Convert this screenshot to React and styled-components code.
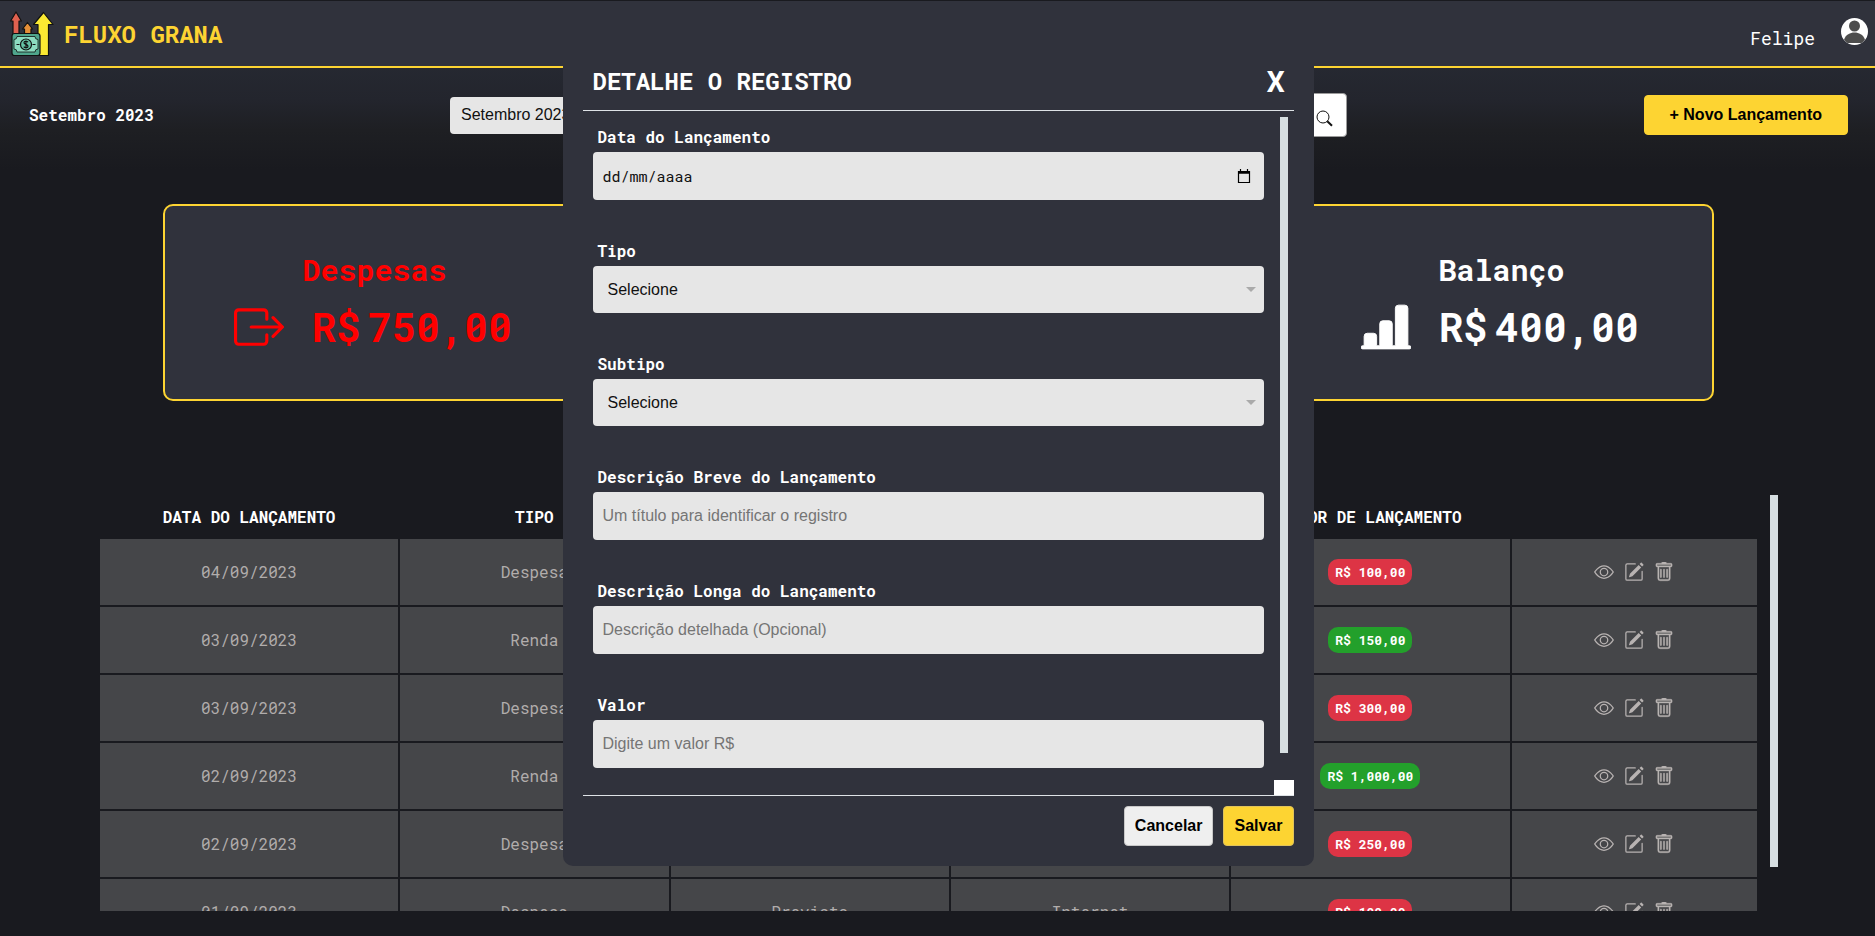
import React from 'react';
import styled, { createGlobalStyle } from 'styled-components';
import { BsEye, BsPencilSquare, BsTrash, BsBoxArrowRight, BsBarChartLineFill } from 'react-icons/bs';

const mono = '"Roboto Mono", "DejaVu Sans Mono", monospace';
const sans = '"Liberation Sans", Arial, sans-serif';
const yellow = '#fdd432';
const panel = '#30323c';
const dark = '#191a1f';
const thumb = '#d6dee1';

const GlobalStyle = createGlobalStyle`
  * { box-sizing: border-box; }
  body {
    margin: 0;
    background: ${dark};
    color: #fff;
    font-family: ${mono};
    font-size: 16px;
    line-height: 24px;
    overflow: hidden;
  }
  h1, h2, h3, p { margin: 0; }
  button, input, select { font: inherit; }
  button { cursor: pointer; }
`;

const Page = styled.div`
  display: flex;
  flex-direction: column;
  height: 100vh;
  background: linear-gradient(#262932 60px, #23252d 100px, #1e1f23 130px, ${dark} 170px);
`;

const Header = styled.header`
  display: flex;
  flex: none;
  justify-content: space-between;
  align-items: center;
  height: 68px;
  padding: 0 7px 0 10px;
  background: ${panel};
  border-top: 1px solid ${dark};
  border-bottom: 2px solid ${yellow};
`;

const Brand = styled.div`
  display: flex;
  align-items: center;
  gap: 10px;
`;

const BrandName = styled.h1`
  color: ${yellow};
  font-size: 24px;
  line-height: 32px;
`;

const User = styled.div`
  display: flex;
  align-items: flex-start;
  gap: 26px;
`;

const UserName = styled.span`
  padding-top: 8px;
  font-size: 18px;
`;

const FilterBar = styled.section`
  display: grid;
  flex: none;
  grid-template-columns: 24% 48% 1fr;
  align-items: center;
  height: 94px;
`;

const Period = styled.h2`
  padding-left: 29px;
  font-size: 16px;
`;

const Filters = styled.div`
  display: flex;
  align-items: center;
  justify-content: space-between;
  padding-right: 3px;
`;

const MonthSelect = styled.select`
  appearance: none;
  width: 200px;
  height: 37px;
  padding: 0 11px;
  border: 0;
  border-radius: 4px;
  background: #e6e6e6;
  color: #111;
  font-family: ${sans};
`;

const SearchButton = styled.button`
  display: flex;
  align-items: center;
  justify-content: flex-end;
  width: 52px;
  height: 44px;
  padding: 6px 13px 0;
  border: 1px solid #9b9b9b;
  border-radius: 4px;
  background: #fff;
`;

const Button = styled.button`
  height: 40px;
  padding: 0 ${p => p.$pad}px;
  border: 1px solid ${p => p.$edge};
  border-radius: 4px;
  background: ${p => p.$bg};
  color: #000;
  font: bold 16px ${sans};
`;

const NewEntry = styled.div`
  display: flex;
  justify-content: flex-end;
  padding-right: 27px;
`;

const Summary = styled.section`
  display: flex;
  flex: none;
  align-items: center;
  justify-content: space-between;
  height: 197px;
  margin: 42px 161px 94px 163px;
  padding: 0 70px 0 69px;
  background: ${panel};
  border: 2px solid ${yellow};
  border-radius: 10px;
`;

const Total = styled.article`
  width: 281px;
  color: ${p => p.$color};
  font-weight: bold;
`;

const TotalTitle = styled.h2`
  font-size: 30px;
  line-height: 42px;
  text-align: center;
`;

const TotalRow = styled.div`
  display: flex;
  align-items: center;
  gap: 28px;
  padding-top: 6px;

  svg {
    flex: none;
    font-size: 50px;
  }
`;

const Amount = styled.p`
  display: flex;
  gap: 8px;
  font-size: 40px;
  line-height: 60px;
`;

const Entries = styled.section`
  display: flex;
  flex: 1;
  gap: 11px;
  min-height: 0;
  margin: 0 97px 25px 98px;
`;

const TableView = styled.div`
  flex: 1;
  overflow: hidden;
`;

const Table = styled.table`
  width: 100%;
  table-layout: fixed;
  border-collapse: separate;
  border-spacing: 2px;
  text-align: center;
`;

const Col = styled.col`
  width: ${p => p.$w};
`;

const Th = styled.th`
  height: 40px;
  padding: 0;
  text-transform: uppercase;
`;

const Td = styled.td`
  height: 66px;
  padding: 0;
  background: #454649;
  color: #b1adac;
`;

const Badge = styled.span`
  display: inline-block;
  padding: 0 7px;
  border-radius: 10px;
  background: ${p => (p.$income ? '#23a02b' : '#dd3445')};
  color: #fff;
  font-size: 13px;
  font-weight: bold;
  line-height: 26px;
`;

const Actions = styled.div`
  display: flex;
  justify-content: center;
  gap: 10px;
`;

const IconButton = styled.button`
  display: flex;
  padding: 0;
  border: 0;
  background: none;
  color: #b8b3b2;
  font-size: 20px;
`;

const PageThumb = styled.div`
  width: 8px;
  height: 372px;
  background: ${thumb};
`;

const Modal = styled.div`
  position: fixed;
  top: 60px;
  left: 30%;
  display: flex;
  flex-direction: column;
  width: calc(40% + 1px);
  padding: 0 20px 20px;
  background: ${panel};
  border-radius: 0 0 10px 10px;

  &::before {
    content: '';
    position: absolute;
    right: 0;
    bottom: 100%;
    left: 0;
    height: 10px;
    background: ${panel};
  }
`;

const ModalHeader = styled.div`
  display: flex;
  align-items: center;
  justify-content: space-between;
  height: 51px;
  padding: 0 9px 8px 10px;
  border-bottom: 1px solid #dee2e6;
`;

const ModalTitle = styled.h2`
  font-size: 24px;
  line-height: 32px;
`;

const CloseButton = styled.button`
  padding: 0;
  border: 0;
  background: none;
  color: #fff;
  font-size: 30px;
  font-weight: bold;
  line-height: 40px;
`;

const ModalBody = styled.div`
  display: flex;
  gap: 10px;
  border-bottom: 1px solid #dee2e6;
`;

const Form = styled.form`
  display: flex;
  flex: 1;
  flex-direction: column;
  gap: 39px;
  padding: 14px 0 27px 10px;
`;

const Field = styled.div`
  display: flex;
  flex-direction: column;
  gap: 3px;
`;

const Label = styled.label`
  padding-left: 5px;
  font-weight: bold;
`;

const Control = styled.div`
  display: flex;
  align-items: center;
  height: ${p => p.$h}px;
  padding-right: ${p => p.$pr}px;
  border-radius: 4px;
  background: #e6e6e6;
`;

const Input = styled.input`
  flex: 1;
  min-width: 0;
  height: 100%;
  padding: 0 10px;
  border: 0;
  background: none;
  color: #111;
  font-family: ${p => (p.$mono ? mono : sans)};
  font-size: ${p => (p.$mono ? 15 : 16)}px;

  &::placeholder { color: ${p => (p.$mono ? '#111' : '#757575')}; opacity: 1; }
`;

const Select = styled.select`
  flex: 1;
  appearance: none;
  height: 100%;
  padding: 0 15px;
  border: 0;
  background: none;
  color: #111;
  font-family: ${sans};
`;

const Caret = styled.span`
  border: 5px solid transparent;
  border-top-color: #aaa;
  border-bottom: 0;
`;

const ScrollTrack = styled.div`
  display: flex;
  flex-direction: column;
  align-items: center;
  justify-content: space-between;
  width: 20px;
  padding-top: 6px;
`;

const ModalThumb = styled.div`
  width: 8px;
  height: 636px;
  background: ${thumb};
`;

const ScrollCorner = styled.div`
  width: 20px;
  height: 15px;
  background: #fff;
`;

const ModalFooter = styled.div`
  display: flex;
  justify-content: flex-end;
  gap: 10px;
  padding-top: 10px;
`;

const Logo = () => (
  <svg width="44" height="46" viewBox="10 11 44 46" stroke="#111" strokeWidth="1.2" strokeLinejoin="round" aria-hidden="true">
    <path d="M16 12l5.4 9H19v14h-6V21h-2.400z" fill="#e0614f" />
    <path d="M27.500 22.500l5 6.500H31v7h-6.500v-7h-2z" fill="#e58f38" />
    <path d="M43.500 12.500l9.500 12h-4.500V55.500H38v-31h-4.500z" fill="#fbe932" />
    <rect x="12" y="33.500" width="28" height="22" rx="2.500" fill="#4fa58c" />
    <path d="M17 36.500h18q0 3 3 3v9.500q-3 0-3 3H17q0-3-3-3v-9.500q3 0 3-3z" fill="#8cdcc0" strokeWidth=".8" />
    <circle cx="26" cy="44.500" r="5.500" fill="#65c3a5" />
    <path d="M16.500 44.500h3M32.500 44.500h3" />
    <path d="M28 42.200c-.8-1.400-4-1.300-4 .5s4 1.600 4 3.500-3.200 2-4.200.4M26 40.500v8" fill="none" />
  </svg>
);

const Avatar = () => (
  <svg width="27" height="27" viewBox="0 0 27 27" role="img" aria-label="Perfil">
    <circle cx="13.500" cy="13.500" r="13.500" fill="#fff" />
    <circle cx="13.500" cy="8" r="5.500" fill="#4d4d4d" />
    <path d="M3 21.500C5 16.500 9 14.500 13.500 14.500s8.500 2 10.500 7c-1 1.500-2.200 2.500-3.500 3.500h-14C5.200 24 4 23 3 21.500z" fill="#4d4d4d" />
  </svg>
);

const SearchIcon = () => (
  <svg width="17" height="17" viewBox="0 0 17 17" fill="none" stroke="#111" aria-hidden="true">
    <circle cx="7" cy="7" r="6" />
    <path d="M11.300 11.300l4.700 4.500" strokeWidth="2" />
  </svg>
);

const CalendarIcon = () => (
  <svg width="14" height="15" viewBox="0 0 14 15" fill="none" stroke="#000" aria-hidden="true">
    <path d="M1.500 2.500h11v11h-11z" strokeWidth="1.200" />
    <path d="M1 3.500h12" strokeWidth="2.500" />
    <path d="M3.500 0v3M10.500 0v3" strokeWidth="1.200" />
  </svg>
);

const entries = [
  { date: '04/09/2023', type: 'Despesa', value: 'R$ 100,00' },
  { date: '03/09/2023', type: 'Renda', value: 'R$ 150,00', income: true },
  { date: '03/09/2023', type: 'Despesa', value: 'R$ 300,00' },
  { date: '02/09/2023', type: 'Renda', value: 'R$ 1,000,00', income: true },
  { date: '02/09/2023', type: 'Despesa', value: 'R$ 250,00' },
  { date: '01/09/2023', type: 'Despesa', subtype: 'Previsto', title: 'Internet', value: 'R$ 100,00' },
];

const TextField = ({ id, label, placeholder }) => (
  <Field>
    <Label htmlFor={id}>{label}</Label>
    <Control $h={48} $pr={0}>
      <Input id={id} type="text" placeholder={placeholder} />
    </Control>
  </Field>
);

const SelectField = ({ id, label }) => (
  <Field>
    <Label htmlFor={id}>{label}</Label>
    <Control $h={47} $pr={8}>
      <Select id={id}>
        <option>Selecione</option>
      </Select>
      <Caret />
    </Control>
  </Field>
);

const EntryRow = ({ entry }) => (
  <tr>
    <Td>{entry.date}</Td>
    <Td>{entry.type}</Td>
    <Td>{entry.subtype}</Td>
    <Td>{entry.title}</Td>
    <Td><Badge $income={entry.income}>{entry.value}</Badge></Td>
    <Td>
      <Actions>
        <IconButton aria-label="Ver"><BsEye /></IconButton>
        <IconButton aria-label="Editar"><BsPencilSquare /></IconButton>
        <IconButton aria-label="Excluir"><BsTrash stroke="currentColor" strokeWidth="0.3" /></IconButton>
      </Actions>
    </Td>
  </tr>
);

export default function App() {
  return (
    <>
      <GlobalStyle />
      <Page>
        <Header>
          <Brand>
            <Logo />
            <BrandName>FLUXO GRANA</BrandName>
          </Brand>
          <User>
            <UserName>Felipe</UserName>
            <Avatar />
          </User>
        </Header>

        <FilterBar>
          <Period>Setembro 2023</Period>
          <Filters>
            <MonthSelect aria-label="Mês">
              <option>Setembro 2023</option>
            </MonthSelect>
            <SearchButton aria-label="Buscar"><SearchIcon /></SearchButton>
          </Filters>
          <NewEntry>
            <Button $bg={yellow} $edge={yellow} $pad={25}>+ Novo Lançamento</Button>
          </NewEntry>
        </FilterBar>

        <Summary>
          <Total $color="#ff0000">
            <TotalTitle>Despesas</TotalTitle>
            <TotalRow>
              <BsBoxArrowRight />
              <Amount><span>R$</span><span>750,00</span></Amount>
            </TotalRow>
          </Total>
          <Total $color="#ffffff">
            <TotalTitle>Balanço</TotalTitle>
            <TotalRow>
              <BsBarChartLineFill stroke="currentColor" strokeWidth="0.3" />
              <Amount><span>R$</span><span>400,00</span></Amount>
            </TotalRow>
          </Total>
        </Summary>

        <Entries>
          <TableView>
            <Table>
              <colgroup>
                <Col $w="18.1%" />
                <Col $w="16.3%" />
                <Col $w="16.9%" />
                <Col $w="16.9%" />
                <Col $w="16.9%" />
                <Col />
              </colgroup>
              <thead>
                <tr>
                  <Th>Data do Lançamento</Th>
                  <Th>Tipo</Th>
                  <Th />
                  <Th />
                  <Th>Valor de Lançamento</Th>
                  <Th />
                </tr>
              </thead>
              <tbody>
                {entries.map((entry, i) => <EntryRow key={i} entry={entry} />)}
              </tbody>
            </Table>
          </TableView>
          <PageThumb />
        </Entries>
      </Page>

      <Modal role="dialog" aria-labelledby="modal-title">
        <ModalHeader>
          <ModalTitle id="modal-title">DETALHE O REGISTRO</ModalTitle>
          <CloseButton>X</CloseButton>
        </ModalHeader>
        <ModalBody>
          <Form id="entry-form">
            <Field>
              <Label htmlFor="date">Data do Lançamento</Label>
              <Control $h={48} $pr={13}>
                <Input id="date" type="text" $mono placeholder="dd/mm/aaaa" />
                <CalendarIcon />
              </Control>
            </Field>
            <SelectField id="type" label="Tipo" />
            <SelectField id="subtype" label="Subtipo" />
            <TextField id="title" label="Descrição Breve do Lançamento" placeholder="Um título para identificar o registro" />
            <TextField id="details" label="Descrição Longa do Lançamento" placeholder="Descrição detelhada (Opcional)" />
            <TextField id="value" label="Valor" placeholder="Digite um valor R$" />
          </Form>
          <ScrollTrack>
            <ModalThumb />
            <ScrollCorner />
          </ScrollTrack>
        </ModalBody>
        <ModalFooter>
          <Button type="button" $bg="#efefef" $edge="#c8c8c8" $pad={10}>Cancelar</Button>
          <Button type="submit" form="entry-form" $bg={yellow} $edge="#e0c25a" $pad={10}>Salvar</Button>
        </ModalFooter>
      </Modal>
    </>
  );
}
